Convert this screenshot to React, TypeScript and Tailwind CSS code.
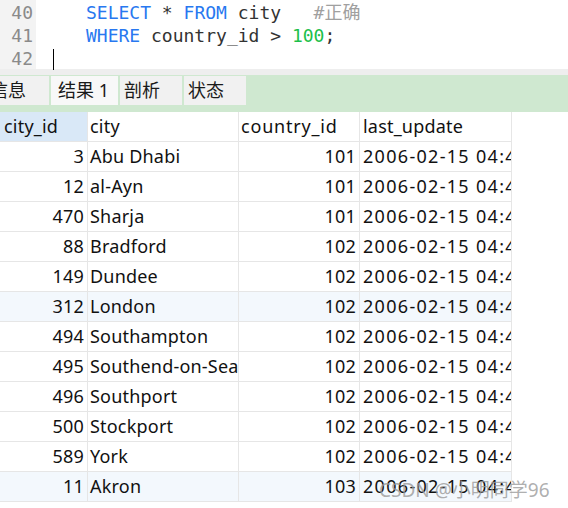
const rows: Array<[number, string, number]> = [
  [3, 'Abu Dhabi', 101],
  [12, 'al-Ayn', 101],
  [470, 'Sharja', 101],
  [88, 'Bradford', 102],
  [149, 'Dundee', 102],
  [312, 'London', 102],
  [494, 'Southampton', 102],
  [495, 'Southend-on-Sea', 102],
  [496, 'Southport', 102],
  [500, 'Stockport', 102],
  [589, 'York', 102],
  [11, 'Akron', 103],
];

const mono = { fontFamily: '"DejaVu Sans Mono", "Liberation Mono", "Noto Sans CJK SC", monospace' };

function Editor() {
  return <div className="flex h-[69px] bg-white text-[18px] leading-[23px]" style={mono}>
    <div className="w-[36px] shrink-0 bg-[#f3f3f3] pt-[1px] pr-[3px] text-right text-[#8a8a8a]">
      <div>40</div>
      <div>41</div>
      <div>42</div>
    </div>
    <div className="relative flex-1 pt-[1px] pl-[50px] text-[#333] whitespace-pre">
      <div><span className="text-[#2878f0]">SELECT</span> * <span className="text-[#2878f0]">FROM</span> city   <span className="text-[#a0a0a0]">#正确</span></div>
      <div><span className="text-[#2878f0]">WHERE</span> country_id &gt; <span className="text-[#1cbf4a]">100</span>;</div>
      <div className="h-[23px]"><span className="ml-[-33px] mt-[-2px] inline-block h-[21px] w-px bg-black align-middle" /></div>
    </div>
  </div>;
}

function Tabs() {
  const tabs = ['信息', '结果 1', '剖析', '状态'];
  return <div className="border-t-[6px] border-[#eeeeee] bg-[#cfe8d0] pb-[7px] pt-[1px]">
    <div className="flex gap-[2px] overflow-hidden">
      {tabs.map((tab, i) => <div
        key={tab}
        className={`flex h-[29px] shrink-0 items-center px-[7px] text-[18px] text-[#1a1a1a] ${i === 0 ? 'ml-[-17px] w-[66px]' : ''} ${i === 1 ? 'w-[67px] bg-[#f8f8f8]' : 'bg-[#f1f1f1]'} ${i > 1 ? 'w-[62px] pl-[4px]' : ''}`}
      >{tab}</div>)}
    </div>
  </div>;
}

function Table() {
  const cell = 'flex h-[30px] shrink-0 items-center border-r border-b border-[#e6e6e6] overflow-hidden whitespace-nowrap';
  return <div className="w-[512px] tracking-[0.2px]">
    <div className="flex">
      <div className={`${cell} w-[88px] bg-[#d9e8f7] pl-[4px]`}>city_id</div>
      <div className={`${cell} w-[151px] pl-[2px]`}>city</div>
      <div className={`${cell} w-[121px] pl-[2px] tracking-[0.8px]`}>country_id</div>
      <div className={`${cell} w-[152px] pl-[3px]`}>last_update</div>
    </div>
    {rows.map(([id, city, country], i) => <div key={id} className={`flex ${i === 5 || i === 11 ? 'bg-[#f3f8fd]' : 'bg-white'}`}>
      <div className={`${cell} w-[88px] justify-end pr-[3px]`}>{id}</div>
      <div className={`${cell} w-[151px] pl-[2px]`}>{city}</div>
      <div className={`${cell} w-[121px] justify-end pr-[3px]`}>{country}</div>
      <div className={`${cell} w-[152px] pl-[3px] tracking-[1.3px]`}>2006-02-15 04:45:04</div>
    </div>)}
  </div>;
}

export default function App() {
  return <div className="relative h-[508px] w-[568px] overflow-hidden bg-white text-[18px] text-[#111]" style={{ fontFamily: '"Noto Sans", "Noto Sans CJK SC", sans-serif' }}>
    <Editor />
    <Tabs />
    <Table />
    <div className="absolute left-[379px] top-[476px] text-[19px] text-[#9a9a9a]/80">CSDN @小明同学96</div>
  </div>;
}
